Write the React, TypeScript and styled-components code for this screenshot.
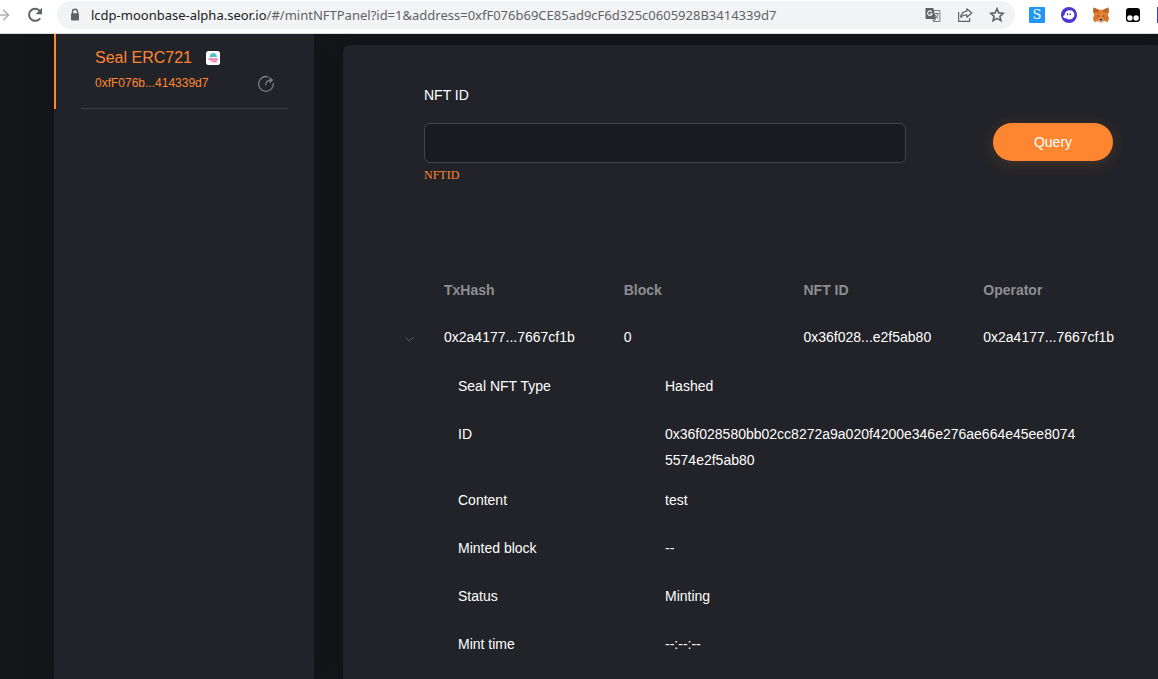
import React, { useState } from "react";
import styled, { createGlobalStyle } from "styled-components";

const GlobalStyle = createGlobalStyle`
  *, *::before, *::after { box-sizing: border-box; }
  body {
    margin: 0;
    background: #15161a;
    color: #fff;
    font-family: Arial, "Liberation Sans", sans-serif;
    font-size: 14px;
    overflow-x: hidden;
  }
  button, input { font: inherit; }
`;

const Page = styled.div`
  min-height: 100vh;
  display: flex;
  flex-direction: column;
`;

const BrowserBar = styled.header`
  position: relative;
  z-index: 1;
  display: flex;
  align-items: center;
  height: 34px;
  padding: 1px 0 4px;
  background: #fff;
  border-bottom: 1px solid #d5dcd7;
`;

const IconButton = styled.button<{ $width?: number }>`
  display: flex;
  flex: none;
  width: ${(p) => p.$width ?? 16}px;
  height: 16px;
  padding: 0;
  border: 0;
  background: none;
  color: #5f6368;
  cursor: pointer;
`;

const NavButtons = styled.nav`
  display: flex;
  flex: none;
  gap: 17px;
  width: 57px;
`;

const AddressBar = styled.div`
  display: flex;
  flex: 1;
  min-width: 0;
  align-items: center;
  height: 28px;
  padding: 0 10px 0 12px;
  border-radius: 14px;
  background: #f1f3f4;
`;

const LockIcon = styled.svg`
  flex: none;
  color: #5f6368;
`;

const Url = styled.div`
  flex: 1;
  min-width: 0;
  margin-left: 10px;
  overflow: hidden;
  white-space: nowrap;
  font-family: "Segoe UI", "Noto Sans", sans-serif;
  font-size: 13px;
  line-height: 20px;
  color: #5f6368;
`;

const Host = styled.span`
  color: #202124;
`;

const PageActions = styled.div`
  display: flex;
  flex: none;
  gap: 16px;
`;

const Extensions = styled.div`
  display: flex;
  flex: none;
  gap: 16px;
  width: 129px;
  margin-left: 14px;
  overflow: hidden;
`;

const Workspace = styled.div`
  display: flex;
  flex: 1;
  padding-left: 54px;
`;

const Sidebar = styled.aside`
  flex: none;
  width: 260px;
  background: #222328;
  box-shadow: 0 0 20px rgba(16, 16, 16, 0.6);
`;

const ContractItem = styled.section`
  height: 75px;
  padding: 0 26px 0 25px;
  border-left: 2px solid #ff8631;
`;

const ContractBody = styled.div`
  display: flex;
  justify-content: space-between;
  height: 75px;
  padding: 14px 13px 0 14px;
  border-bottom: 1px solid #3d3e42;
`;

const ContractName = styled.h1`
  display: flex;
  align-items: center;
  gap: 14px;
  margin: 0;
  font-size: 16px;
  font-weight: 400;
  line-height: 20px;
  color: #ff8631;
`;

const ContractAddress = styled.p`
  margin: 6px 0 0;
  font-size: 12px;
  line-height: 18px;
  color: #ff8631;
`;

const ShareSlot = styled.div`
  display: flex;
  align-items: flex-end;
  padding-bottom: 17px;
`;

const Panel = styled.main`
  flex: 1;
  min-width: 0;
  margin: 11px 0 0 29px;
  padding: 40px 11px 11px 61px;
  border-radius: 8px 0 0 0;
  background: #222328;
  box-shadow: 0 0 20px rgba(16, 16, 16, 0.6);
`;

const QueryForm = styled.form`
  display: flex;
  align-items: flex-start;
  gap: 87px;
  padding: 0 34px 0 20px;
`;

const Field = styled.div`
  display: flex;
  flex: 1;
  flex-direction: column;
  min-width: 0;
`;

const FieldLabel = styled.label`
  line-height: 20px;
`;

const FieldInput = styled.input`
  width: 100%;
  height: 40px;
  margin-top: 18px;
  padding: 0 12px;
  border: 1px solid #42444a;
  border-radius: 6px;
  background: #1a1b20;
  color: #fff;
  outline: none;
`;

const FieldHint = styled.span`
  margin-top: 4px;
  font-family: "Times New Roman", "Liberation Serif", serif;
  font-size: 12px;
  line-height: 16px;
  color: #ff8631;
`;

const QueryButton = styled.button`
  flex: none;
  width: 120px;
  height: 38px;
  margin-top: 38px;
  border: 0;
  border-radius: 19px;
  background: #ff8631;
  box-shadow: 0 3px 16px rgba(255, 134, 49, 0.16);
  color: #fff;
  cursor: pointer;
`;

const Records = styled.table`
  width: 100%;
  margin-top: 83px;
  border-collapse: collapse;
  table-layout: fixed;
`;

const ExpandColumn = styled.col`
  width: 24px;
`;

const HeadCell = styled.th`
  height: 48px;
  padding: 0 16px;
  text-align: left;
  font-weight: 700;
  color: #8d8e92;
`;

const Cell = styled.td<{ $flush?: boolean }>`
  height: 48px;
  padding: ${(p) => (p.$flush ? "2px 0 0" : "0 16px 2px")};
  white-space: nowrap;
`;

const DetailCell = styled.td`
  padding: 0 68px 0 54px;
`;

const Details = styled.dl`
  margin: 0;
`;

const DetailRow = styled.div`
  display: flex;
  min-height: 48px;
  padding: 11px 0 3px;
  line-height: 26px;
`;

const DetailTerm = styled.dt`
  flex: none;
  width: 207px;
`;

const DetailValue = styled.dd`
  flex: 1;
  min-width: 0;
  margin: 0;
  word-break: break-all;
`;

const ForwardIcon = () => (
  <svg width="11" height="16" viewBox="0 0 11 16" fill="none" stroke="#aeb1b5" strokeWidth="1.8">
    <path d="M0 8h9M3.5 2.2 9.3 8l-5.8 5.8" />
  </svg>
);

const ReloadIcon = () => (
  <svg width="16" height="16" viewBox="0 0 16 16">
    <path d="M13.2 11.200A6.100 6.100 0 1 1 12.800 3.800" fill="none" stroke="currentColor" strokeWidth="2" />
    <path d="M15 .8v6.400H8.600z" fill="currentColor" />
  </svg>
);

const TranslateIcon = () => (
  <svg width="16" height="16" viewBox="0 0 16 16">
    <path d="M6 3.500h8.900v11H8.600" fill="none" stroke="#7a7d81" />
    <path d="M.5 1h7.800l2.700 11H1.400A1 1 0 0 1 .5 11z" fill="#5f6368" />
    <path d="M6.800 4.800A2.300 2.300 0 1 0 7 7.200V6.700H4.800" fill="none" stroke="#f1f3f4" strokeWidth="1.100" />
    <path d="M9.600 6.700h4.300M11.700 5.700v1M13 7c-.4 2-1.500 3.300-3 4.400M10.400 8.200c.6 1.400 1.600 2.400 2.900 3.200M7.600 12l1.200 2.500 1.900-2.700" fill="none" stroke="#6d7074" />
  </svg>
);

const ShareIcon = () => (
  <svg width="16" height="16" viewBox="0 0 16 16" fill="none" stroke="currentColor" strokeWidth="1.2">
    <path d="M1.600 5v9.300h11V11" />
    <path d="M9.800 1.800 14.800 6l-5 4.300V7.800C7 7.600 5.200 8.500 3.700 10.400 4.100 7 6.200 4.600 9.800 4.200z" strokeLinejoin="round" />
  </svg>
);

const StarIcon = () => (
  <svg width="16" height="16" viewBox="0 0 16 16" fill="none" stroke="currentColor" strokeWidth="1.6">
    <path d="m8 1.800 1.800 4.100 4.500.4-3.400 3 1 4.400L8 11.400l-3.900 2.300 1-4.400-3.400-3 4.500-.4z" />
  </svg>
);

const SBadge = styled.span`
  width: 16px;
  height: 16px;
  border-radius: 1px;
  background: #2196f3;
  color: #fff;
  font-family: "DejaVu Serif", serif;
  font-size: 13px;
  line-height: 16px;
  text-align: center;
`;

const GhostIcon = () => (
  <svg width="16" height="16" viewBox="0 0 16 16">
    <circle cx="8" cy="8" r="8" fill="#4c35cf" />
    <path d="M2 8.600c.7.800 1.300.3 1.500-.8C4 5 5.900 3.300 8.500 3.300c2.900 0 4.900 1.900 4.900 4.500 0 2.700-2 4.600-4.900 4.600-1.800 0-2.800-.6-3.900-1.300C3.500 11.800 2 10.500 2 8.600z" fill="#fff" />
    <ellipse cx="6.600" cy="7.300" rx=".7" ry="1" fill="#3a269e" />
    <ellipse cx="9.200" cy="7.300" rx=".7" ry="1" fill="#3a269e" />
  </svg>
);

const FoxIcon = () => (
  <svg width="16" height="16" viewBox="0 0 16 16">
    <path d="m.6.6 5.200 2.200h4.400L15.400.6l.5 4.500-1 3.500 1 3-1.300 3.400-3.600-1-1.700 1.400H6.700L5 14l-3.600 1L.1 11.600l1-3-1-3.500z" fill="#e88231" />
    <path d="m.6.6 5.200 2.200.5 2.400-4.600.6-1.600-.7zM15.400.6l-5.200 2.200-.5 2.400 4.600.6 1.600-.7z" fill="#b8662f" />
    <path d="m1.100 8.600 3.700-.1.600 3.100L1.400 15 .1 11.600zM14.900 8.600l-3.700-.1-.6 3.100 4 3.400 1.300-3.400z" fill="#d9752b" />
    <path d="m4.300 8.200 2 .6-.3 1.200zM11.700 8.200l-2 .6.3 1.200z" fill="#233447" />
    <path d="M5.200 12.600 8 11.600l2.800 1L9.400 15H6.600z" fill="#c9bdb2" />
    <path d="M6.800 12h2.400l.4 1.600H6.400z" fill="#25272b" />
  </svg>
);

const TwinEyesIcon = () => (
  <svg width="16" height="16" viewBox="0 0 16 16">
    <rect x="1" y="1" width="14" height="14" rx="3" fill="#000" />
    <circle cx="4.900" cy="11" r="2.700" fill="#fff" />
    <circle cx="11.100" cy="11" r="2.700" fill="#fff" />
  </svg>
);

const BlueTileIcon = () => (
  <svg width="16" height="16" viewBox="0 0 16 16">
    <path d="M0 0h16v16H0z" fill="#3540c8" />
  </svg>
);

const SealLogo = () => (
  <svg width="14" height="14" viewBox="0 0 14 14" aria-hidden="true">
    <rect width="14" height="14" rx="2.500" fill="#fff" />
    <path d="M3.600 6C3.800 3.500 5.200 2 7.300 2s3.500 1.500 3.600 4z" fill="#4cc3c6" />
    <path d="M2 8.300c1-1.700 3-1.800 4.500-1.300 1.500.5 3.600-.5 5.600.5.500 1-.6 1.700-1.400 1.800.9.400 1 1.200 0 1.700-1.800.9-4 .7-5.600-.4-.5-.4-.2-.9.400-1.100C4.200 9.700 3 9.500 2 8.300z" fill="#ef8fc2" />
  </svg>
);

const OpenIcon = () => (
  <svg width="18" height="18" viewBox="0 0 18 18" fill="none" stroke="#7d7e82" strokeWidth="1.300">
    <path d="M11.200 1.900A7.400 7.400 0 1 0 16.300 8" />
    <path d="M8.600 10.500C8.500 7.300 10.200 5.100 14.800 5M12.200 2.500 15.300 5l-2.600 2.700" />
  </svg>
);

const ChevronIcon = ({ open }: { open: boolean }) => (
  <svg width="11" height="16" viewBox="0 0 11 16" fill="none" stroke="#5b5c61">
    <path d={open ? "M1.300 6 5.500 10.200 9.700 6" : "M3 4l4 4-4 4"} />
  </svg>
);

const columns = ["TxHash", "Block", "NFT ID", "Operator"];
const record = ["0x2a4177...7667cf1b", "0", "0x36f028...e2f5ab80", "0x2a4177...7667cf1b"];
const details = [
  ["Seal NFT Type", "Hashed"],
  ["ID", "0x36f028580bb02cc8272a9a020f4200e346e276ae664e45ee80745574e2f5ab80"],
  ["Content", "test"],
  ["Minted block", "--"],
  ["Status", "Minting"],
  ["Mint time", "--:--:--"],
];

export default function App() {
  const [open, setOpen] = useState(true);
  const [nftId, setNftId] = useState("");

  return (
    <Page>
      <GlobalStyle />
      <BrowserBar>
        <NavButtons aria-label="Browser">
          <IconButton type="button" aria-label="Forward" $width={10}><ForwardIcon /></IconButton>
          <IconButton type="button" aria-label="Reload"><ReloadIcon /></IconButton>
        </NavButtons>
        <AddressBar>
          <LockIcon width="12" height="14" viewBox="0 0 12 14" aria-hidden="true">
            <path d="M3.500 6V3.800a2.500 2.500 0 0 1 5 0V6" fill="none" stroke="currentColor" strokeWidth="1.400" />
            <rect x="2" y="5.200" width="8" height="7.300" rx="1" fill="currentColor" />
          </LockIcon>
          <Url>
            <Host>lcdp-moonbase-alpha.seor.io</Host>
            /#/mintNFTPanel?id=1&amp;address=0xfF076b69CE85ad9cF6d325c0605928B3414339d7
          </Url>
          <PageActions>
            <IconButton type="button" aria-label="Translate"><TranslateIcon /></IconButton>
            <IconButton type="button" aria-label="Share"><ShareIcon /></IconButton>
            <IconButton type="button" aria-label="Bookmark"><StarIcon /></IconButton>
          </PageActions>
        </AddressBar>
        <Extensions>
          <IconButton type="button"><SBadge>S</SBadge></IconButton>
          <IconButton type="button" aria-label="Ghost wallet"><GhostIcon /></IconButton>
          <IconButton type="button" aria-label="Fox wallet"><FoxIcon /></IconButton>
          <IconButton type="button" aria-label="Scripts"><TwinEyesIcon /></IconButton>
          <IconButton type="button" aria-label="Extension"><BlueTileIcon /></IconButton>
        </Extensions>
      </BrowserBar>

      <Workspace>
        <Sidebar>
          <ContractItem>
            <ContractBody>
              <div>
                <ContractName>Seal ERC721 <SealLogo /></ContractName>
                <ContractAddress>0xfF076b...414339d7</ContractAddress>
              </div>
              <ShareSlot>
                <IconButton type="button" aria-label="Open contract" $width={18}><OpenIcon /></IconButton>
              </ShareSlot>
            </ContractBody>
          </ContractItem>
        </Sidebar>

        <Panel>
          <QueryForm onSubmit={(e) => e.preventDefault()}>
            <Field>
              <FieldLabel htmlFor="nft-id">NFT ID</FieldLabel>
              <FieldInput id="nft-id" value={nftId} onChange={(e) => setNftId(e.target.value)} />
              <FieldHint>NFTID</FieldHint>
            </Field>
            <QueryButton type="submit">Query</QueryButton>
          </QueryForm>

          <Records>
            <colgroup>
              <ExpandColumn />
              {columns.map((c) => <col key={c} />)}
            </colgroup>
            <thead>
              <tr>
                <td />
                {columns.map((c) => <HeadCell key={c} scope="col">{c}</HeadCell>)}
              </tr>
            </thead>
            <tbody>
              <tr>
                <Cell $flush>
                  <IconButton type="button" aria-label="Toggle details" aria-expanded={open} $width={11} onClick={() => setOpen(!open)}>
                    <ChevronIcon open={open} />
                  </IconButton>
                </Cell>
                {record.map((value, i) => <Cell key={i}>{value}</Cell>)}
              </tr>
              {open && (
                <tr>
                  <DetailCell colSpan={5}>
                    <Details>
                      {details.map(([term, value]) => (
                        <DetailRow key={term}>
                          <DetailTerm>{term}</DetailTerm>
                          <DetailValue>{value}</DetailValue>
                        </DetailRow>
                      ))}
                    </Details>
                  </DetailCell>
                </tr>
              )}
            </tbody>
          </Records>
        </Panel>
      </Workspace>
    </Page>
  );
}
